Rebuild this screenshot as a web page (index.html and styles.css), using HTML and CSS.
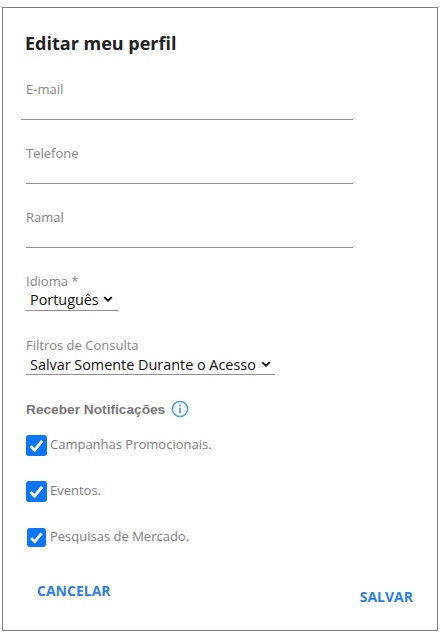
FILE: index.html
```html
<!DOCTYPE html>
<html lang="pt">
<head>
<meta charset="utf-8">
<title>Editar meu perfil</title>
<link rel="stylesheet" href="styles.css">
</head>
<body>
<main class="card">
  <h1 class="title">Editar meu perfil</h1>
  <div class="field field-wide"><label class="label">E-mail</label><input class="input" type="text"></div>
  <div class="field"><label class="label">Telefone</label><input class="input" type="text"></div>
  <div class="field"><label class="label">Ramal</label><input class="input" type="text"></div>
  <div class="pick">
    <label class="label">Idioma *</label>
    <div class="select-wrap select-lang">
      <select class="select"><option>Português</option></select>
      <svg class="chevron" viewBox="0 0 10 6" aria-hidden="true"><path d="M1.2 1.1L5 4.6l3.8-3.5" fill="none" stroke="#111" stroke-width="1.9"/></svg>
    </div>
  </div>
  <div class="pick pick-filter">
    <label class="label">Filtros de Consulta</label>
    <div class="select-wrap select-filter">
      <select class="select"><option>Salvar Somente Durante o Acesso</option></select>
      <svg class="chevron" viewBox="0 0 10 6" aria-hidden="true"><path d="M1.2 1.1L5 4.6l3.8-3.5" fill="none" stroke="#111" stroke-width="1.9"/></svg>
    </div>
  </div>
  <div class="notify">
    <span class="notify-title">Receber Notificações</span>
    <svg class="info" viewBox="0 0 18 18" width="18" height="18" aria-hidden="true"><circle cx="9" cy="9" r="7.6" fill="none" stroke="#4a9fee" stroke-width="1.5"/><rect x="8.1" y="7.6" width="1.8" height="5.6" fill="#4a9fee"/><rect x="8.1" y="4.6" width="1.8" height="1.8" fill="#4a9fee"/></svg>
  </div>
  <div class="check">
    <span class="box"><svg viewBox="0 0 21 21" aria-hidden="true"><path d="M4.6 11.2l4 3.9 7.5-9.2" fill="none" stroke="#fff" stroke-width="3"/></svg></span>
    <span class="check-text">Campanhas Promocionais.</span>
  </div>
  <div class="check">
    <span class="box"><svg viewBox="0 0 21 21" aria-hidden="true"><path d="M4.6 11.2l4 3.9 7.5-9.2" fill="none" stroke="#fff" stroke-width="3"/></svg></span>
    <span class="check-text">Eventos.</span>
  </div>
  <div class="check check-small">
    <span class="box"><svg viewBox="0 0 21 21" aria-hidden="true"><path d="M4.6 11.2l4 3.9 7.5-9.2" fill="none" stroke="#fff" stroke-width="3"/></svg></span>
    <span class="check-text">Pesquisas de Mercado.</span>
  </div>
  <div class="actions">
    <button class="action" type="button">CANCELAR</button>
    <button class="action action-save" type="button">SALVAR</button>
  </div>
</main>
</body>
</html>
```
FILE: styles.css
```css
* { box-sizing: border-box; }
html, body { margin: 0; padding: 0; background: #fff; }
body { font-family: "Open Sans", sans-serif; height: 634px; overflow: hidden; padding: 7px 5px 3px 2px; }
.card {
  height: 624px;
  border: 1px solid #7f7f7f;
  padding: 22px 0 0 23px;
  display: flex;
  flex-direction: column;
}
.title { margin: 0 0 0 -1px; font-size: 18px; line-height: 26px; font-weight: 700; color: #212121; }
.label { display: block; font-size: 13px; line-height: 18px; color: #858585; }
.field { width: 327px; height: 64px; display: flex; flex-direction: column; }
.field-wide { width: 332px; margin: 24px 0 0 -5px; }
.field-wide .label { padding-left: 5px; }
.input { display: block; margin-top: 3px; width: 100%; height: 19px; border: 0; border-bottom: 1px solid #8f8f8f; background: transparent; outline: 0; padding: 0; }
.pick { display: flex; flex-direction: column; align-items: flex-start; }
.pick-filter { margin-top: 25px; }
.select-wrap { position: relative; margin-top: -1px; height: 22px; }
.select-filter { margin-top: 0; height: 21px; }
.select-lang { width: 92px; }
.select-filter { width: 249px; }
.select {
  display: block;
  appearance: none;
  -webkit-appearance: none;
  width: 100%;
  height: 100%;
  font-family: "Open Sans", sans-serif;
  font-size: 14.4px;
  color: #111;
  border: 0;
  border-bottom: 1px solid #8f8f8f;
  background: #fff;
  padding: 0 0 0 4px;
  outline: 0;
  border-radius: 0;
}
.chevron { position: absolute; top: 7px; right: 5px; width: 10px; height: 6px; pointer-events: none; }
.select-filter .chevron { top: 7px; right: 4px; }
.notify { display: flex; align-items: center; gap: 6px; margin-top: 24px; height: 20px; }
.notify-title { font-family: "Liberation Sans", Arial, sans-serif; font-weight: 700; font-size: 13.7px; color: #777; }
.info { display: block; }
.check { display: flex; align-items: center; gap: 3px; height: 21px; margin-top: 25px; }
.notify + .check { margin-top: 16px; }
.box { width: 21px; height: 21px; background: #0a75f5; border-radius: 3px; display: block; flex: none; }
.box svg { display: block; width: 100%; height: 100%; }
.check-small .box { width: 19px; height: 19px; margin: 0 1px; }
.check-text { font-size: 13px; line-height: 18px; color: #7d7d7d; position: relative; top: -2px; }
.actions { display: flex; justify-content: space-between; margin: 33px 24px 0 11px; }
.action { border: 0; background: transparent; padding: 0; font-family: "Open Sans", sans-serif; font-size: 14px; font-weight: 700; line-height: 20px; color: #2f80e4; }
.action-save { position: relative; top: 6px; }
```
